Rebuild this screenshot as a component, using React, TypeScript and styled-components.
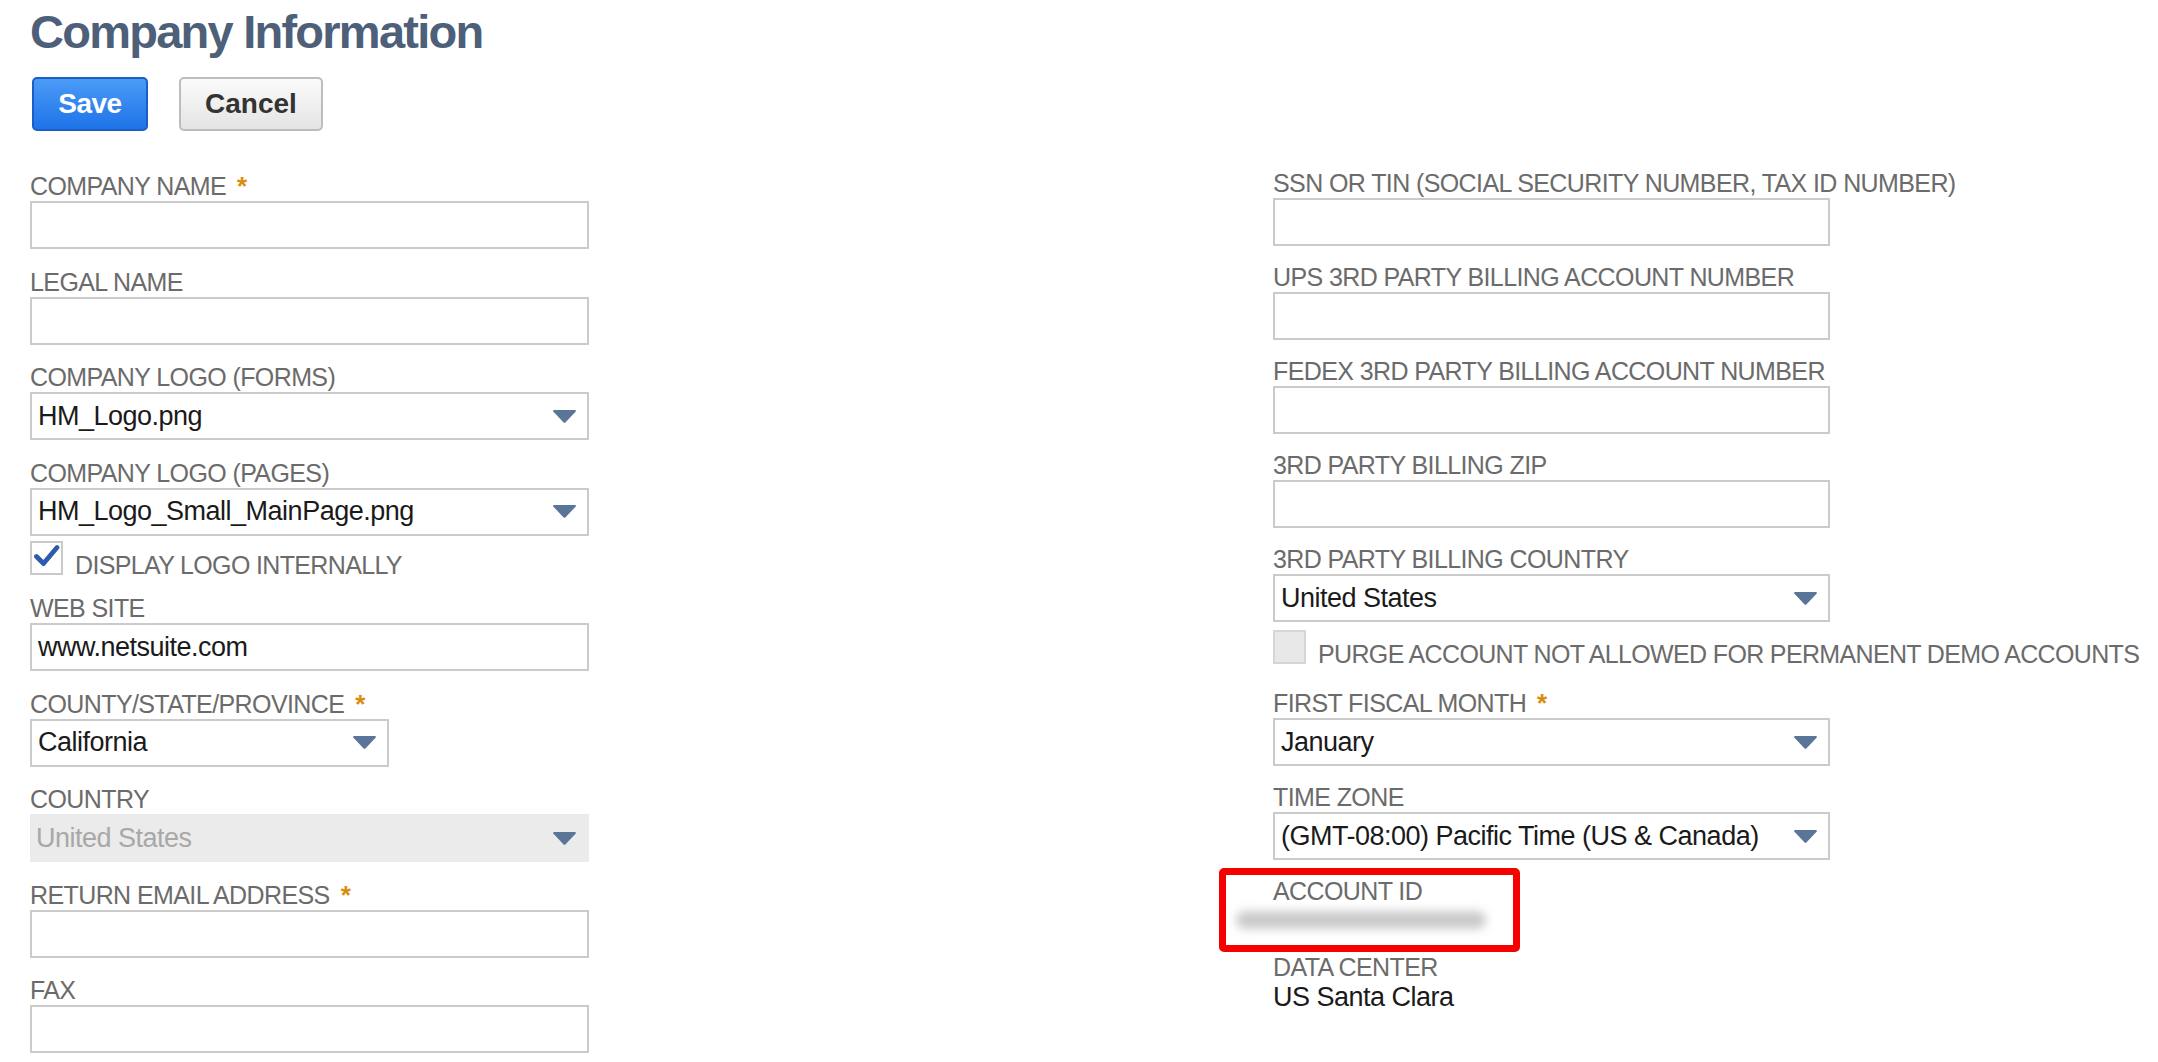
import React from "react";
import styled, { createGlobalStyle } from "styled-components";

const GlobalStyle = createGlobalStyle`
  html, body {
    margin: 0;
    padding: 0;
    background: #ffffff;
  }
  body {
    font-family: "Liberation Sans", Arial, Helvetica, sans-serif;
  }
`;

const Page = styled.div`
  box-sizing: border-box;
  width: 2158px;
  height: 1062px;
  overflow: hidden;
  padding: 4px 30px 0;
`;

const Title = styled.h1`
  margin: 0;
  font-size: 47px;
  line-height: 56px;
  font-weight: 700;
  letter-spacing: -1.75px;
  color: #4d5f79;
`;

const Toolbar = styled.div`
  display: flex;
  gap: 31px;
  margin: 17px 0 0 2px;
`;

const Button = styled.button<{ $primary?: boolean }>`
  box-sizing: border-box;
  min-width: 116px;
  height: 54px;
  padding: 0 24px;
  font-family: "Liberation Sans", Arial, sans-serif;
  font-size: 28px;
  font-weight: 700;
  border-radius: 5px;
  border: 2px solid ${(p) => (p.$primary ? "#1a5ec6" : "#bdbdbd")};
  color: ${(p) => (p.$primary ? "#ffffff" : "#333333")};
  background: ${(p) =>
    p.$primary
      ? "linear-gradient(#4b9bf6, #1e73e8)"
      : "linear-gradient(#fbfbfb, #e4e4e4)"};
  letter-spacing: ${(p) => (p.$primary ? "-0.5px" : "0")};
`;

const Form = styled.div`
  display: grid;
  grid-template-columns: 1243px auto;
  align-items: start;
  margin-top: 36px;
`;

const Column = styled.div<{ $top: number; $gap: number }>`
  display: flex;
  flex-direction: column;
  gap: ${(p) => p.$gap}px;
  padding-top: ${(p) => p.$top}px;
`;

const Field = styled.div<{ $trail?: number }>`
  position: relative;
  display: flex;
  flex-direction: column;
  padding-bottom: ${(p) => p.$trail ?? 0}px;
`;

const Label = styled.div`
  height: 30px;
  line-height: 30px;
  font-size: 25px;
  letter-spacing: -0.6px;
  color: #6b6b6b;
  white-space: nowrap;
`;

const Required = styled.span`
  margin-left: 11px;
  font-size: 26px;
  font-weight: 700;
  color: #d88e0c;
`;

const Box = styled.div<{ $width: number; $disabled?: boolean }>`
  box-sizing: border-box;
  width: ${(p) => p.$width}px;
  height: 48px;
  display: flex;
  align-items: center;
  justify-content: space-between;
  padding: ${(p) => (p.$disabled ? "0 12px 0 6px" : "0 10px 0 6px")};
  border: ${(p) => (p.$disabled ? "none" : "2px solid #cbcbcb")};
  background: ${(p) => (p.$disabled ? "#ebebeb" : "#ffffff")};
  font-size: 27px;
  letter-spacing: -0.5px;
  color: ${(p) => (p.$disabled ? "#a8a8a8" : "#1a1a1a")};
  white-space: nowrap;
`;

const CheckRow = styled.div<{ $lead: number }>`
  display: flex;
  align-items: flex-end;
  gap: 12px;
  margin-top: ${(p) => p.$lead}px;
`;

const CheckBox = styled.span<{ $disabled?: boolean }>`
  box-sizing: border-box;
  flex: none;
  width: 33px;
  height: 34px;
  padding: 1px;
  border: 2px solid ${(p) => (p.$disabled ? "#d6d6d6" : "#cacaca")};
  background: ${(p) => (p.$disabled ? "#e8e8e8" : "#ffffff")};
`;

const CheckText = styled.span`
  line-height: 25px;
  margin-bottom: -3px;
  font-size: 25px;
  letter-spacing: -0.65px;
  color: #6b6b6b;
  white-space: nowrap;
`;

const StaticValue = styled.div`
  height: 30px;
  line-height: 30px;
  font-size: 27px;
  letter-spacing: -0.5px;
  color: #1a1a1a;
`;

const Redacted = styled.div`
  height: 28px;
  display: flex;
  align-items: center;
  margin-left: -37px;
`;

const Smudge = styled.div`
  width: 250px;
  height: 18px;
  border-radius: 9px;
  background: #cacaca;
  filter: blur(5px);
`;

const Highlight = styled.div`
  position: absolute;
  left: -54px;
  top: -8px;
  width: 301px;
  height: 84px;
  box-sizing: border-box;
  border: 7px solid #f70000;
  border-radius: 5px;
  pointer-events: none;
`;

const Arrow = () => (
  <svg width="25" height="13" viewBox="0 0 25 13">
    <path
      d="M1 1.2 Q1 0 2.4 0 H22.6 Q24 0 24 1.2 L13.6 12.2 Q12.5 13.2 11.4 12.2 Z"
      fill="#5a7597"
    />
  </svg>
);

const Check = () => (
  <svg width="27" height="25" viewBox="0 0 27 25">
    <path
      d="M3.5 12.5 L10.5 19.5 L24 3.5"
      fill="none"
      stroke="#2c5cab"
      strokeWidth="4.8"
      strokeLinecap="round"
      strokeLinejoin="round"
    />
  </svg>
);

type FieldDef = {
  label: string;
  required?: boolean;
  kind: "text" | "select";
  value?: string;
  width?: number;
  disabled?: boolean;
  check?: { label: string; checked?: boolean; disabled?: boolean; lead: number; trail: number };
};

const leftFields: FieldDef[] = [
  { label: "COMPANY NAME", required: true, kind: "text" },
  { label: "LEGAL NAME", kind: "text" },
  { label: "COMPANY LOGO (FORMS)", kind: "select", value: "HM_Logo.png" },
  {
    label: "COMPANY LOGO (PAGES)",
    kind: "select",
    value: "HM_Logo_Small_MainPage.png",
    check: { label: "DISPLAY LOGO INTERNALLY", checked: true, lead: 5, trail: 1 },
  },
  { label: "WEB SITE", kind: "text", value: "www.netsuite.com" },
  { label: "COUNTY/STATE/PROVINCE", required: true, kind: "select", value: "California", width: 359 },
  { label: "COUNTRY", kind: "select", value: "United States", disabled: true },
  { label: "RETURN EMAIL ADDRESS", required: true, kind: "text" },
  { label: "FAX", kind: "text" },
];

const rightFields: FieldDef[] = [
  { label: "SSN OR TIN (SOCIAL SECURITY NUMBER, TAX ID NUMBER)", kind: "text" },
  { label: "UPS 3RD PARTY BILLING ACCOUNT NUMBER", kind: "text" },
  { label: "FEDEX 3RD PARTY BILLING ACCOUNT NUMBER", kind: "text" },
  { label: "3RD PARTY BILLING ZIP", kind: "text" },
  {
    label: "3RD PARTY BILLING COUNTRY",
    kind: "select",
    value: "United States",
    check: {
      label: "PURGE ACCOUNT NOT ALLOWED FOR PERMANENT DEMO ACCOUNTS",
      disabled: true,
      lead: 8,
      trail: 8,
    },
  },
  { label: "FIRST FISCAL MONTH", required: true, kind: "select", value: "January" },
  { label: "TIME ZONE", kind: "select", value: "(GMT-08:00) Pacific Time (US & Canada)" },
];

const FormField: React.FC<{ def: FieldDef; width: number }> = ({ def, width }) => (
  <Field $trail={def.check?.trail}>
    <Label>
      {def.label}
      {def.required && <Required>*</Required>}
    </Label>
    <Box $width={def.width ?? width} $disabled={def.disabled}>
      <span>{def.value ?? ""}</span>
      {def.kind === "select" && <Arrow />}
    </Box>
    {def.check && (
      <CheckRow $lead={def.check.lead}>
        <CheckBox $disabled={def.check.disabled}>{def.check.checked && <Check />}</CheckBox>
        <CheckText>{def.check.label}</CheckText>
      </CheckRow>
    )}
  </Field>
);

export default function App() {
  return (
    <Page>
      <GlobalStyle />
      <Title>Company Information</Title>
      <Toolbar>
        <Button $primary>Save</Button>
        <Button>Cancel</Button>
      </Toolbar>
      <Form>
        <Column $top={4} $gap={17.5}>
          {leftFields.map((f) => (
            <FormField key={f.label} def={f} width={559} />
          ))}
        </Column>
        <Column $top={1} $gap={16}>
          {rightFields.map((f) => (
            <FormField key={f.label} def={f} width={557} />
          ))}
          <Field $trail={2}>
            <Highlight />
            <Label>ACCOUNT ID</Label>
            <Redacted>
              <Smudge />
            </Redacted>
          </Field>
          <Field>
            <Label>DATA CENTER</Label>
            <StaticValue>US Santa Clara</StaticValue>
          </Field>
        </Column>
      </Form>
    </Page>
  );
}
